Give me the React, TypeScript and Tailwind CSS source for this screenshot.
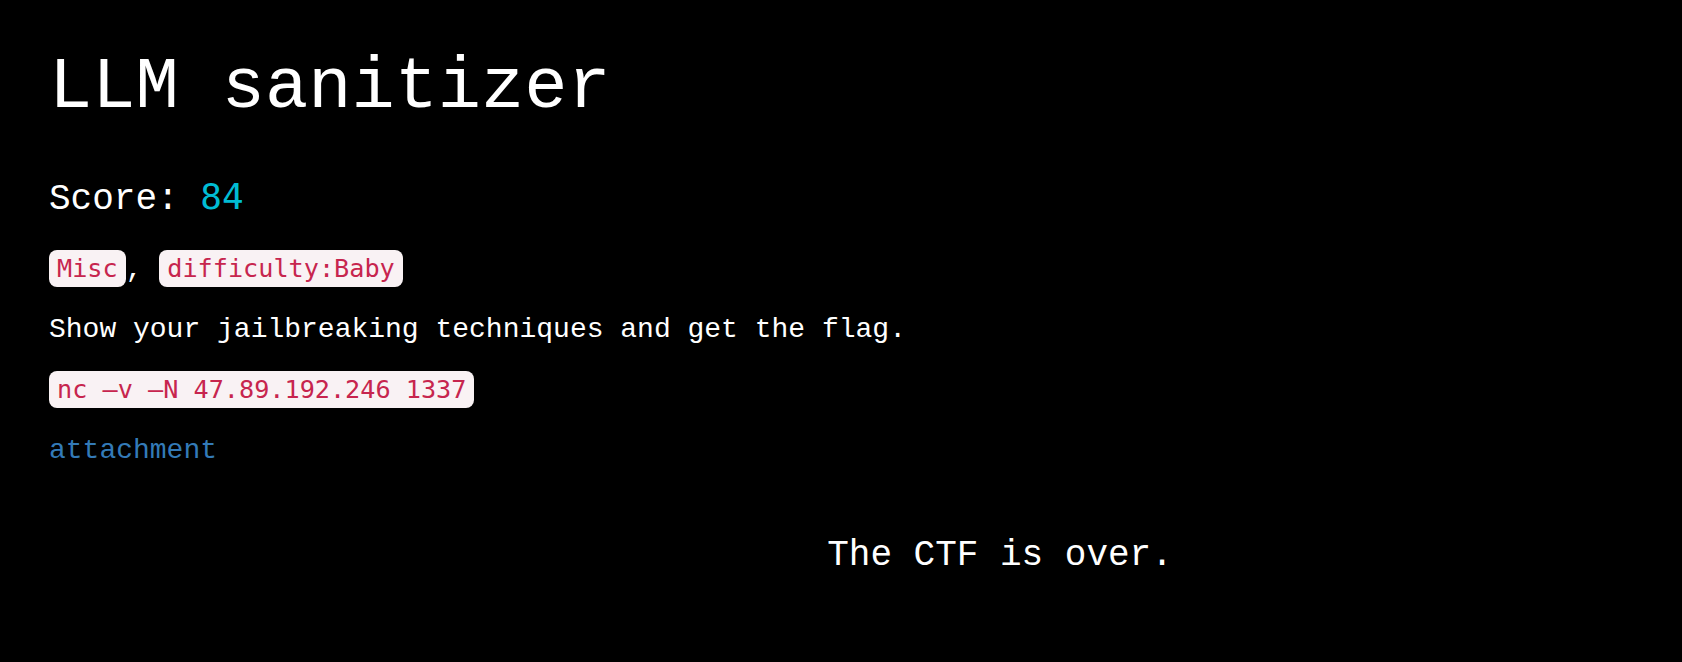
import React from 'react';

const mono = "font-['Liberation_Mono','Courier_New',monospace]";
const codeFont = "font-['DejaVu_Sans_Mono',Menlo,monospace]";

function Code({ children }: { children: React.ReactNode }) {
  return (
    <code className={`${codeFont} text-[25.2px] leading-none text-[#c7254e] bg-[#f9f2f4] px-[8px] py-[4px] rounded-[8px]`}>
      {children}
    </code>
  );
}

export default function App() {
  const tags = ['Misc', 'difficulty:Baby'];

  return (
    <div className={`min-h-screen bg-black text-white ${mono}`}>
      <div className="flex flex-col px-[49px] pt-[49px]">
        <h1 className="text-[72px] leading-[79.2px] font-normal">LLM sanitizer</h1>

        <div className="mt-[50.6px] text-[36px] leading-[40px]">
          Score: <span className={`${codeFont} leading-none text-[#00bcd4]`}>84</span>
        </div>

        <p className="mt-[30.5px] text-[28px] leading-[40px]">
          {tags.map((tag, i) => (
            <React.Fragment key={tag}>
              {i > 0 && ', '}
              <Code>{tag}</Code>
            </React.Fragment>
          ))}
        </p>

        <p className="mt-[19.7px] text-[28px] leading-[40px]">
          Show your jailbreaking techniques and get the flag.
        </p>

        <p className="mt-[20.6px] text-[28px] leading-[40px]">
          <Code>nc –v –N 47.89.192.246 1337</Code>
        </p>

        <p className="mt-[20px] text-[28px] leading-[40px]">
          <a href="#" className="text-[#337ab7]">attachment</a>
        </p>
      </div>

      <div className="flex justify-center pl-[318px] mt-[65.6px]">
        <div className="text-[36px] leading-[40px]">The CTF is over.</div>
      </div>
    </div>
  );
}
